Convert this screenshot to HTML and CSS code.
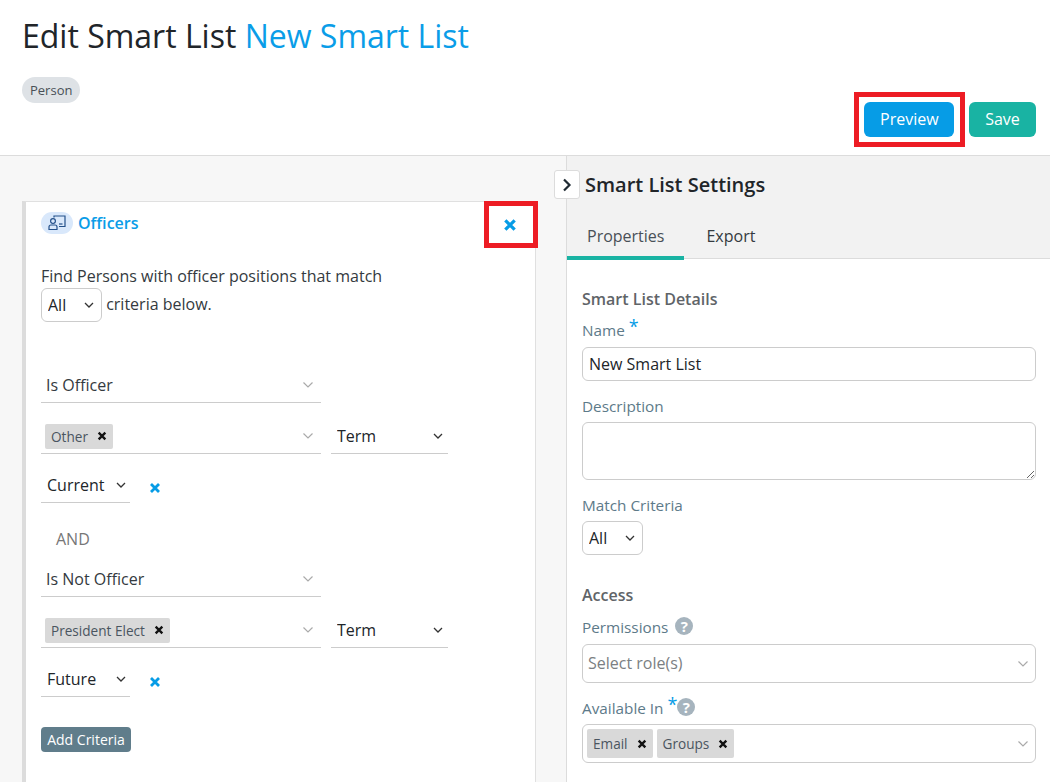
FILE: index.html
```html
<!DOCTYPE html>
<html lang="en">
<head>
<meta charset="utf-8">
<title>Edit Smart List</title>
<link rel="stylesheet" href="styles.css">
</head>
<body>
<svg class="defs" width="0" height="0" aria-hidden="true">
  <symbol id="x" viewBox="0 0 12 12"><path d="M2 2l8 8M10 2l-8 8" fill="none" stroke="currentColor" stroke-width="2.8"/></symbol>
  <symbol id="chev" viewBox="0 0 12 8"><path d="M1.5 1.5L6 6l4.500-4.500" fill="none" stroke="currentColor" stroke-width="1.200"/></symbol>
</svg>
<header class="top">
  <div class="top-text">
    <h1 class="title">Edit Smart List <span class="title-name">New Smart List</span></h1>
    <span class="badge">Person</span>
  </div>
  <div class="actions">
    <button class="btn btn-preview">Preview</button>
    <button class="btn btn-save">Save</button>
  </div>
</header>
<main class="panes">
  <section class="left">
    <article class="card">
      <div class="card-head">
        <span class="pill">
          <svg width="18" height="16" viewBox="0 0 18 16" fill="none" stroke="#24508a" stroke-width="1.200">
            <path d="M6 2.500V1h11v10.500h-6"/>
            <path d="M11 9h3.500"/>
            <circle cx="5" cy="6" r="2.400"/>
            <path d="M1 14.500v-2.500c0-1.200 1-2 2-2h4c1 0 2 .8 2 2v2.500z"/>
          </svg>
        </span>
        <span class="card-title">Officers</span>
        <span class="card-close"><svg class="x-big"><use href="#x"/></svg></span>
      </div>
      <div class="find">Find Persons with officer positions that match<br>
        <select class="box-select small"><option>All</option></select> criteria below.</div>

      <div class="line-select first"><span>Is Officer</span><svg class="chev"><use href="#chev"/></svg></div>
      <div class="row">
        <div class="line-select tagged"><span class="tag">Other<svg class="x-tag"><use href="#x"/></svg></span><svg class="chev"><use href="#chev"/></svg></div>
        <select class="under term"><option>Term</option></select>
      </div>
      <div class="row third">
        <select class="under when"><option>Current</option></select>
        <svg class="x-row"><use href="#x"/></svg>
      </div>
      <div class="and">AND</div>
      <div class="line-select"><span>Is Not Officer</span><svg class="chev"><use href="#chev"/></svg></div>
      <div class="row">
        <div class="line-select tagged"><span class="tag">President Elect<svg class="x-tag"><use href="#x"/></svg></span><svg class="chev"><use href="#chev"/></svg></div>
        <select class="under term"><option>Term</option></select>
      </div>
      <div class="row third">
        <select class="under when"><option>Future</option></select>
        <svg class="x-row"><use href="#x"/></svg>
      </div>
      <button class="add">Add Criteria</button>
    </article>
  </section>
  <aside class="right">
    <button class="toggle" aria-label="Collapse">
      <svg width="10" height="14" viewBox="0 0 10 14"><path d="M2 1.500L7.500 7 2 12.500" fill="none" stroke="#1f2a33" stroke-width="2.200"/></svg>
    </button>
    <div class="right-head">
      <h2 class="settings-title">Smart List Settings</h2>
      <nav class="tabs"><span class="tab active">Properties</span><span class="tab">Export</span></nav>
    </div>
    <form class="form">
      <h3 class="section">Smart List Details</h3>
      <div class="label name-label">Name <span class="req">*</span></div>
      <input class="input" value="New Smart List">
      <div class="label desc-label">Description</div>
      <textarea class="textarea"></textarea>
      <div class="label match-label">Match Criteria</div>
      <select class="box-select"><option>All</option></select>
      <h3 class="section access">Access</h3>
      <div class="label perm-label">Permissions <span class="help">?</span></div>
      <div class="multi"><span class="placeholder">Select role(s)</span><svg class="chev"><use href="#chev"/></svg></div>
      <div class="label avail-label">Available In <span class="req">*</span><span class="help tight">?</span></div>
      <div class="multi tags">
        <span class="tag big">Email<svg class="x-tag"><use href="#x"/></svg></span>
        <span class="tag big">Groups<svg class="x-tag"><use href="#x"/></svg></span>
        <svg class="chev"><use href="#chev"/></svg>
      </div>
    </form>
  </aside>
</main>
</body>
</html>
```
FILE: styles.css
```css
* { box-sizing: border-box; }
html, body { height: 100%; }
body {
  margin: 0;
  height: 782px;
  overflow: hidden;
  background: #fff;
  color: #212529;
  font-family: "Open Sans", sans-serif;
  font-size: 16px;
}
.defs { position: absolute; }

.top {
  height: 156px;
  border-bottom: 1px solid #dcdcdc;
  padding: 0 14px 18px 22px;
  display: flex;
  justify-content: space-between;
  align-items: flex-end;
}
.top-text { align-self: flex-start; padding-top: 14px; }
.title { margin: 0; font-size: 32px; font-weight: 400; line-height: 44px; color: #212529; }
.title-name { color: #0a9de8; }
.badge {
  display: inline-block;
  margin-top: 19px;
  height: 26px;
  line-height: 26px;
  padding: 0 8px;
  border-radius: 13px;
  background: #dee2e6;
  color: #495057;
  font-size: 13px;
}
.actions { display: flex; gap: 15px; }
.btn {
  height: 35px;
  border: 0;
  border-radius: 6px;
  color: #fff;
  font: 400 16px "Open Sans", sans-serif;
  padding: 0 16px 2px;
}
.btn-preview { position: relative; width: 90px; background: #069ce6; }
.btn-preview::after {
  content: "";
  position: absolute;
  inset: -10px -11px -10px -10px;
  border: 5px solid #ed1c24;
}
.btn-save { width: 67px; background: #19b3a3; }

.panes { display: flex; height: 626px; }
.left { width: 567px; flex: none; background: #f7f7f7; padding: 45px 30px 0 22px; border-right: 1px solid #dcdcdc; }
.card {
  position: relative;
  height: 700px;
  background: #fff;
  border: 1px solid #e0e0e0;
  border-left: 4px solid #dcdcdc;
  padding: 10px 15px 0 15px;
}
.card-head { display: flex; align-items: center; height: 22px; }
.pill {
  width: 32px;
  height: 22px;
  border-radius: 11px;
  background: #d9e8fb;
  display: flex;
  align-items: center;
  justify-content: center;
  margin-right: 5px;
}
.card-title { color: #0a9de8; font-weight: 600; font-size: 16px; }
.card-close {
  position: absolute;
  top: -1px;
  right: -3px;
  width: 54px;
  height: 47px;
  border: 5px solid #ed1c24;
  padding-right: 2px;
  display: flex;
  align-items: center;
  justify-content: center;
  color: #069ce6;
}
.x-big { width: 14px; height: 14px; }
.find { margin-top: 30px; line-height: 24px; color: #343a40; }
.box-select {
  display: block;
  width: 61px;
  height: 34px;
  appearance: none;
  background: #fff url("data:image/svg+xml,%3Csvg xmlns='http://www.w3.org/2000/svg' width='12' height='8'%3E%3Cpath d='M2 2l4 4 4-4' fill='none' stroke='%23333' stroke-width='1.300'/%3E%3C/svg%3E") no-repeat right 6px center;
  border: 1px solid #ccc;
  border-radius: 6px;
  font: 400 16px "Open Sans", sans-serif;
  color: #212529;
  padding: 0 6px;
}
.box-select.small { display: inline-block; vertical-align: middle; margin-bottom: 2px; }

.line-select {
  width: 280px;
  height: 35px;
  border-bottom: 1px solid #ccc;
  display: flex;
  align-items: center;
  justify-content: space-between;
  padding: 0 7px 0 5px;
  color: #343a40;
  flex: none;
}
.line-select.first { margin-top: 44px; }
.line-select.tagged { padding-left: 4px; }
.chev { width: 12px; height: 8px; color: #aaa; flex: none; }
.row { display: flex; align-items: center; gap: 10px; margin-top: 16px; }
.row.third { margin-top: 14px; gap: 19px; }
.under {
  height: 35px;
  appearance: none;
  background: transparent url("data:image/svg+xml,%3Csvg xmlns='http://www.w3.org/2000/svg' width='12' height='8'%3E%3Cpath d='M2 2l4 4 4-4' fill='none' stroke='%23333' stroke-width='1.300'/%3E%3C/svg%3E") no-repeat right 4px center;
  border: 0;
  border-bottom: 1px solid #ccc;
  border-radius: 0;
  font: 400 16px "Open Sans", sans-serif;
  color: #212529;
  padding: 0 6px;
  outline: 0;
}
.term { width: 117px; }
.when { width: 89px; background-position: right 3px center; }
.x-row { width: 12px; height: 12px; color: #069ce6; position: relative; top: 2px; }
.tag {
  display: inline-flex;
  align-items: center;
  height: 25px;
  padding: 0 6px;
  background: #d9d9d9;
  border-radius: 2px;
  color: #4a5560;
  font-size: 13.6px;
}
.x-tag { width: 10px; height: 10px; color: #111; margin-left: 9px; }
.and { margin: 24px 0 0 15px; height: 24px; line-height: 24px; color: #777; }
.and + .line-select { margin-top: 11px; }
.add {
  display: block;
  margin-top: 30px;
  width: 90px;
  height: 25px;
  padding: 0;
  border: 0;
  border-radius: 4px;
  background: #607d8b;
  color: #fff;
  font: 400 14px "Open Sans", sans-serif;
}

.right { position: relative; flex: 1; min-width: 0; }
.toggle {
  position: absolute;
  left: -13px;
  top: 14px;
  width: 26px;
  height: 29px;
  padding: 0;
  background: #fff;
  border: 1px solid #dcdcdc;
  border-radius: 3px;
  display: flex;
  align-items: center;
  justify-content: center;
}
.right-head { height: 103px; background: #f2f2f2; border-bottom: 1px solid #dcdcdc; padding-top: 15px; }
.settings-title { margin: 0 0 0 18px; font-size: 20px; font-weight: 600; line-height: 27px; color: #212529; }
.tabs { display: flex; margin-top: 20px; }
.tab { height: 41px; padding: 0 20px 0 22px; line-height: 36px; color: #343a40; }
.active { border-bottom: 4px solid #19b3a3; padding: 0 20px; color: #495057; height: 42px; }
.form { padding: 28px 14px 0 15px; }
.section { margin: 0; font-size: 16px; font-weight: 600; line-height: 24px; color: #5f6468; }
.label { color: #5d7a89; line-height: 22px; font-size: 15.3px; }
.req { color: #069ce6; font-size: 18px; line-height: 14px; vertical-align: 3px; }
.name-label { margin-top: 8px; margin-bottom: 6px; }
.input, .textarea, .multi {
  display: block;
  width: 454px;
  border: 1px solid #ccc;
  border-radius: 6px;
  background: #fff;
}
.input {
  height: 34px;
  padding: 0 6px;
  font: 400 16px "Open Sans", sans-serif;
  color: #212529;
}
.desc-label { margin-top: 14px; margin-bottom: 5px; }
.textarea { height: 58px; }
.match-label { margin-top: 14px; margin-bottom: 5px; }
.access { margin-top: 28px; }
.perm-label { margin-top: 9px; margin-bottom: 6px; }
.help {
  display: inline-block;
  width: 18px;
  height: 18px;
  border-radius: 50%;
  background: #a6b4be;
  color: #fff;
  font-size: 15px;
  font-weight: 700;
  line-height: 18px;
  text-align: center;
  vertical-align: 1px;
  margin-left: 3px;
}
.help.tight { margin-left: 0; }
.multi {
  height: 39px;
  display: flex;
  align-items: center;
  justify-content: space-between;
  padding: 0 6px 0 5px;
}
.placeholder { color: #7b7f83; position: relative; top: -1px; }
.avail-label { margin-top: 14px; margin-bottom: 5px; }
.tags { gap: 4px; justify-content: flex-start; padding-left: 4px; }
.tags .chev { margin-left: auto; }
.tag.big { height: 29px; }
```
